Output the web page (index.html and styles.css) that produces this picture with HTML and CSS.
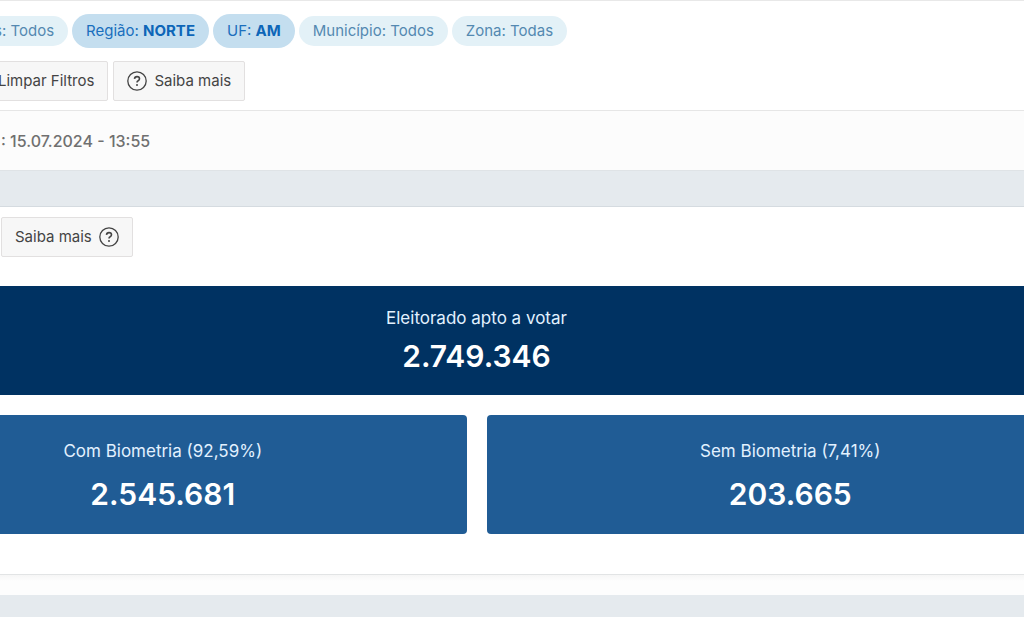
FILE: index.html
```html
<!DOCTYPE html>
<html lang="pt-BR">
<head>
<meta charset="utf-8">
<meta name="viewport" content="width=device-width, initial-scale=1">
<title>Eleitorado apto a votar</title>
<link rel="stylesheet" href="styles.css">
</head>
<body>
<header class="filters">
  <div class="chips">
    <span class="chip chip-cut">s: Todos</span>
    <span class="chip chip-active">Região: <strong>NORTE</strong></span>
    <span class="chip chip-active">UF: <strong>AM</strong></span>
    <span class="chip">Município: Todos</span>
    <span class="chip">Zona: Todas</span>
  </div>
  <div class="actions">
    <button class="button" type="button">Limpar Filtros</button>
    <button class="button" type="button">
      <svg class="icon" viewBox="0 0 20 20" aria-hidden="true"><circle cx="10" cy="10" r="9.2"/><path class="hook" d="M7.5 7.9C7.6 6.4 8.6 5.6 10 5.6s2.5.9 2.5 2.1c0 1-.6 1.5-1.3 2-.8.5-1.2.9-1.2 1.8"/><circle class="dot" cx="10" cy="14" r="1"/></svg>
      Saiba mais
    </button>
  </div>
</header>
<p class="updated">: 15.07.2024 - 13:55</p>
<main class="panel">
  <div class="panel-tools">
    <button class="button" type="button">
      Saiba mais
      <svg class="icon" viewBox="0 0 20 20" aria-hidden="true"><circle cx="10" cy="10" r="9.2"/><path class="hook" d="M7.5 7.9C7.6 6.4 8.6 5.6 10 5.6s2.5.9 2.5 2.1c0 1-.6 1.5-1.3 2-.8.5-1.2.9-1.2 1.8"/><circle class="dot" cx="10" cy="14" r="1"/></svg>
    </button>
  </div>
  <div class="stats">
    <section class="total">
      <h2 class="label">Eleitorado apto a votar</h2>
      <p class="value">2.749.346</p>
    </section>
    <section class="card">
      <h2 class="label">Com Biometria (92,59%)</h2>
      <p class="value">2.545.681</p>
    </section>
    <section class="card">
      <h2 class="label">Sem Biometria (7,41%)</h2>
      <p class="value">203.665</p>
    </section>
  </div>
</main>
<footer class="foot"></footer>
</body>
</html>
```
FILE: styles.css
```css
* {
  box-sizing: border-box;
}

body {
  margin: 0;
  overflow: hidden;
  background: #e5eaee;
  color: #444;
  font-family: Inter, "Liberation Sans", sans-serif;
  font-size: 15px;
  line-height: 20px;
}

h2,
p {
  margin: 0;
}

.filters {
  display: flex;
  flex-direction: column;
  gap: 13px;
  padding: 13px 0 9px;
  border-top: 1px solid #e8e8e8;
  border-bottom: 1px solid #e6e6e6;
  background: #fff;
}

.chips,
.actions {
  display: flex;
  align-items: center;
}

.chips {
  gap: 4px;
  margin-left: -6px;
  white-space: nowrap;
}

.chip {
  padding: 5px 14px;
  border-radius: 17px;
  background: #e3f1f7;
  color: #5489b1;
}

.chip-cut {
  padding-left: 0;
  border-radius: 0 17px 17px 0;
}

.chip-active {
  padding: 7px 14px;
  background: #c4deef;
  color: #1a6fbd;
}

.chip strong {
  color: #0d66b8;
  font-weight: 700;
}

.actions {
  gap: 5px;
  margin-left: -16px;
}

.button {
  display: flex;
  align-items: center;
  gap: 7px;
  height: 40px;
  padding: 0 13px;
  border: 1px solid #e2e0e0;
  border-radius: 2px;
  background: #f7f7f7;
  color: #444;
  font: inherit;
  white-space: nowrap;
}

.icon {
  width: 20px;
  height: 20px;
  fill: none;
  stroke: #444;
  stroke-width: 1.3;
}

.hook {
  stroke-width: 1.6;
}

.dot {
  fill: #444;
  stroke: none;
}

.updated {
  padding: 20px 1px 19px;
  border-bottom: 1px solid #dfe3e6;
  background: #fcfcfc;
  color: #707070;
  font-size: 16px;
  font-weight: 500;
}

.panel {
  margin-top: 35px;
  padding: 10px 0 40px;
  border-top: 1px solid #d5dbe0;
  border-bottom: 1px solid #e2e4e5;
  background: #fff;
}

.panel-tools {
  display: flex;
  padding-left: 1px;
}

.stats {
  display: grid;
  grid-template-columns: 1fr 1fr;
  gap: 20px;
  margin: 29px -70px 0 -141px;
  color: #fff;
  text-align: center;
}

.total {
  grid-column: 1 / -1;
  padding: 20px 0 19px;
  background: #003262;
}

.card {
  padding: 24px 0 20px;
  border-radius: 4px;
  background: #205c95;
}

.label {
  color: #e2f1ff;
  font-size: 17px;
  font-weight: 400;
  line-height: 24px;
}

.value {
  margin-top: 6px;
  font-size: 30px;
  font-weight: 600;
  line-height: 40px;
}

.card .value {
  margin-top: 11px;
}

.foot {
  height: 20px;
  background: linear-gradient(#f6f6f6, #fdfdfd 6px);
}
```
